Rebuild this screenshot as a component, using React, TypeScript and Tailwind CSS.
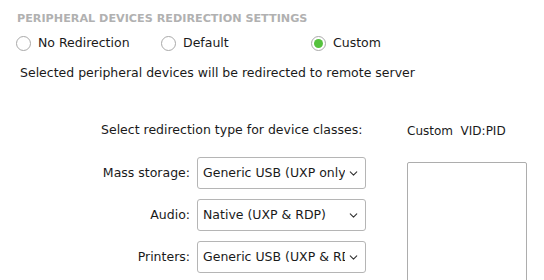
import { ChevronDown } from "lucide-react"

type Option = {
    key: string
    label: string
    checked?: boolean
    width: string
}

const options: Option[] = [
    { key: "none", label: "No Redirection", width: "w-[145px]" },
    { key: "default", label: "Default", width: "w-[150px]" },
    { key: "custom", label: "Custom", checked: true, width: "w-[120px]" },
]

const devices = [
    { key: "mass", label: "Mass storage:", value: "Generic USB (UXP only)" },
    { key: "audio", label: "Audio:", value: "Native (UXP & RDP)" },
    { key: "printers", label: "Printers:", value: "Generic USB (UXP & RDP)" },
]

function Radio(props: { checked?: boolean }) {
    return (
        <span className="w-[15px] h-[15px] rounded-full border border-[#a9a9a9] bg-white flex items-center justify-center shrink-0">
            {props.checked && <span className="w-[9px] h-[9px] rounded-full bg-[#56c23e]" />}
        </span>
    )
}

function Select(props: { value: string }) {
    return (
        <div className="w-[169px] h-[32px] border border-[#b5b5b5] rounded-[3px] bg-white flex items-center pl-[5px] pr-[5px]">
            <span className="flex-1 overflow-hidden whitespace-nowrap text-[12.5px] text-[#1a1a1a]">{props.value}</span>
            <ChevronDown size={13} strokeWidth={2} className="text-[#333] shrink-0 ml-[2px]" />
        </div>
    )
}

export default function App() {
    return (
        <div className="w-[544px] h-[280px] bg-white overflow-hidden flex flex-col font-['DejaVu_Sans',sans-serif] text-[#1a1a1a]">
            <div className="pl-[17px] pt-[12px] text-[11.2px] font-bold text-[#b1b1b1] leading-[14px]">
                PERIPHERAL DEVICES REDIRECTION SETTINGS
            </div>
            <div className="flex items-center pl-[16px] mt-[9px] h-[16px]">
                {
                    options.map((option) => {
                        return (
                            <label key={option.key} className={`${option.width} flex items-center gap-[7px] text-[12.5px]`}>
                                <Radio checked={option.checked} />
                                <span>{option.label}</span>
                            </label>
                        )
                    })
                }
            </div>
            <div className="pl-[20px] mt-[15px] text-[12.5px] leading-[14px]">
                Selected peripheral devices will be redirected to remote server
            </div>
            <div className="flex mt-[43px]">
                <div className="w-[366px] flex flex-col">
                    <div className="pl-[101px] text-[12.5px] leading-[14px]">Select redirection type for device classes:</div>
                    <div className="flex flex-col gap-[10px] mt-[20px]">
                        {
                            devices.map((device) => {
                                return (
                                    <div key={device.key} className="flex items-center justify-end gap-[7px]">
                                        <span className="text-[12.5px]">{device.label}</span>
                                        <Select value={device.value} />
                                    </div>
                                )
                            })
                        }
                    </div>
                </div>
                <div className="flex flex-col pl-[41px]">
                    <div className="text-[12px] leading-[14px] mt-[1px] whitespace-pre">Custom  VID:PID</div>
                    <div className="w-[120px] h-[140px] mt-[24px] border border-[#adadad] rounded-[2px] bg-white" />
                </div>
            </div>
        </div>
    )
}
